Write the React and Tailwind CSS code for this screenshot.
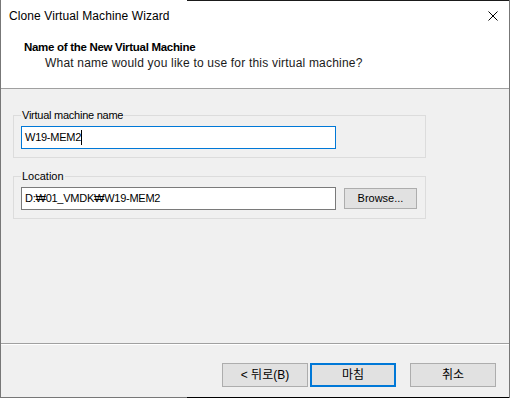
import React from "react";

const font = { fontFamily: '"Liberation Sans", "Noto Sans CJK KR", sans-serif' };

const WizButton = ({ label, primary }) => (
  <button
    className={`w-[86px] h-[24px] bg-[#e1e1e1] text-[12px] text-black flex items-center justify-center ${
      primary ? "border-2 border-[#0078d7]" : "border border-[#adadad]"
    }`}
  >
    {label}
  </button>
);

const App = () => {
  return (
    <div
      className="w-[510px] h-[398px] flex flex-col bg-[#f0f0f0] border-l border-r border-[#777777] text-[12px] text-black"
      style={font}
    >
      {/* top edge */}
      <div className="h-[1px] flex bg-white">
        <div className="w-[186px]"></div>
        <div className="flex-1 bg-[#1a1a1a]"></div>
      </div>

      {/* title bar */}
      <div className="h-[29px] bg-white flex items-center justify-between pl-[8px] pr-[11px]">
        <span className="leading-none tracking-[0.1px]">Clone Virtual Machine Wizard</span>
        <svg width="10" height="10" viewBox="0 0 10 10" className="text-black">
          <path d="M0.5 0.5 L9.5 9.5 M9.5 0.5 L0.5 9.5" stroke="currentColor" strokeWidth="1" />
        </svg>
      </div>

      {/* header */}
      <div className="h-[59px] bg-white border-b border-[#a0a0a0] pl-[23px] pt-[9px]">
        <div className="font-bold text-[11.5px] tracking-[-0.3px] leading-[16px]">Name of the New Virtual Machine</div>
        <div className="pl-[21px] leading-[16px] tracking-[0.2px] text-[#1a1a1a]">
          What name would you like to use for this virtual machine?
        </div>
      </div>

      {/* body */}
      <div className="flex-1 pl-[12px] pt-[18px] text-[11px]">
        <fieldset className="w-[413px] border border-[#dcdcdc] pl-[7px] pt-[3px] pb-[8px]">
          <legend className="px-[1px] leading-[16px] tracking-[-0.25px]">Virtual machine name</legend>
          <div className="w-[315px] h-[23px] bg-white border border-[#0078d7] flex items-center pl-[3px] tracking-[-0.25px]">
            <span>W19-MEM2</span>
            <span className="w-[1px] h-[15px] bg-black"></span>
          </div>
        </fieldset>

        <fieldset className="w-[413px] mt-[10px] border border-[#dcdcdc] pl-[7px] pt-[3px] pb-[8px]">
          <legend className="px-[1px] leading-[16px]">Location</legend>
          <div className="flex items-center gap-[8px]">
            <div className="w-[315px] h-[23px] bg-white border border-[#7a7a7a] flex items-center pl-[3px] tracking-[-0.25px]">
              D:₩01_VMDK₩W19-MEM2
            </div>
            <button className="w-[73px] h-[21px] bg-[#e1e1e1] border border-[#adadad] flex items-center justify-center">
              Browse...
            </button>
          </div>
        </fieldset>
      </div>

      {/* bottom separator */}
      <div className="h-[1px] bg-[#a0a0a0]"></div>
      <div className="h-[1px] bg-white"></div>

      {/* buttons */}
      <div className="h-[52px] flex justify-end items-start pt-[18px] pr-[13px]">
        <WizButton label="< 뒤로(B)" />
        <div className="w-[2px]"></div>
        <WizButton label="마침" primary />
        <div className="w-[14px]"></div>
        <WizButton label="취소" />
      </div>

      {/* bottom edge */}
      <div className="h-[1px] flex">
        <div className="w-[186px] bg-[#777777]"></div>
        <div className="flex-1 bg-black"></div>
      </div>
    </div>
  );
};

export default App;
